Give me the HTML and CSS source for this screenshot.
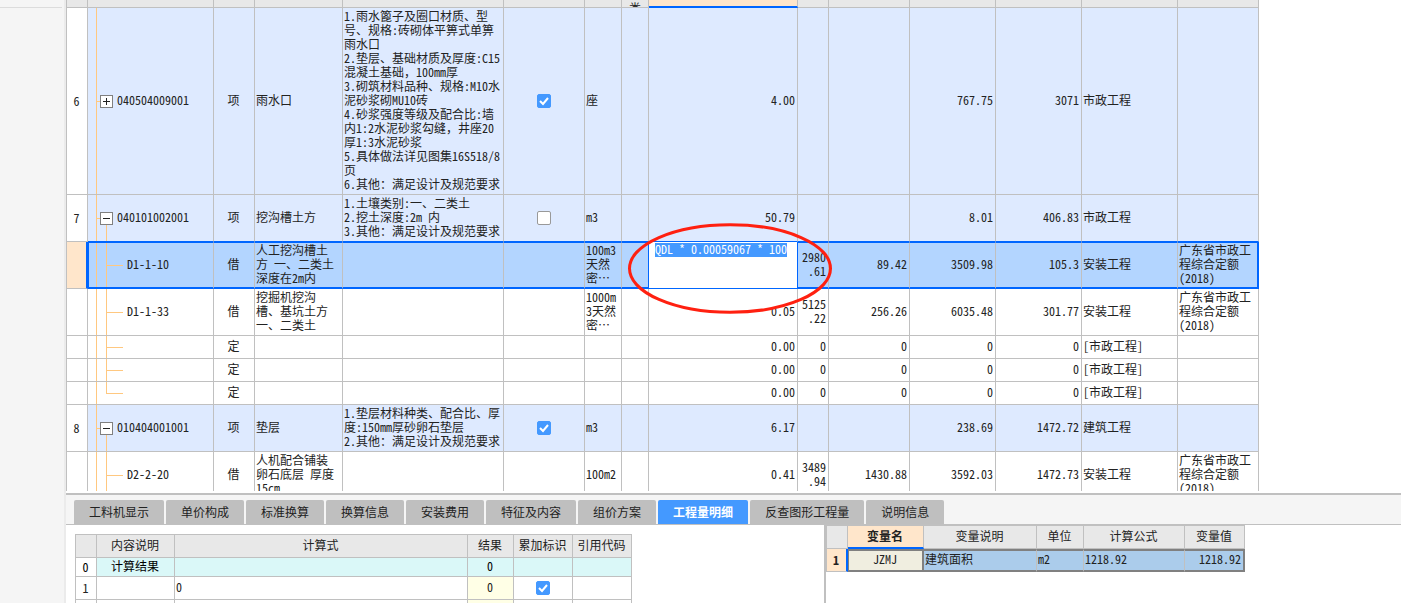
FILE: index.html
```html
<!DOCTYPE html>
<html lang="zh-CN">
<head>
<meta charset="utf-8">
<title>工程量明细</title>
<link rel="stylesheet" href="styles.css">
</head>
<body>
<div class="app">
<aside class="rail"><div class="rail-head"></div></aside>
<main class="main">
<section class="sheet">
<table class="grid bills">
<colgroup><col class="w-no"><col class="w-code"><col class="w-kind"><col class="w-name"><col class="w-desc"><col class="w-check"><col class="w-unit"><col class="w-class"><col class="w-qty"><col class="w-rate"><col class="w-price"><col class="w-cost"><col class="w-cost"><col class="w-major"><col class="w-book"></colgroup>
<thead>
<tr><th></th><th></th><th></th><th></th><th></th><th></th><th></th><th><div class="clip">类</div></th><th class="current"></th><th></th><th></th><th></th><th></th><th></th><th></th></tr>
</thead>
<tbody>
<tr class="item tall"><td class="no">6</td><td class="tree parent"><div class="node"><button class="toggle plus" aria-label="展开"></button><span class="code">040504009001</span></div></td><td class="mid">项</td><td>雨水口</td><td>1.雨水篦子及圈口材质、型<br>号、规格:砖砌体平箅式单箅<br>雨水口<br>2.垫层、基础材质及厚度:C15<br>混凝土基础，100mm厚<br>3.砌筑材料品种、规格:M10水<br>泥砂浆砌MU10砖<br>4.砂浆强度等级及配合比:墙<br>内1:2水泥砂浆勾缝，井座20<br>厚1:3水泥砂浆<br>5.具体做法详见图集16S518/8<br>页<br>6.其他：满足设计及规范要求</td><td class="pick"><input type="checkbox" aria-label="雨水口" checked></td><td>座</td><td></td><td class="num">4.00</td><td></td><td></td><td class="num">767.75</td><td class="num">3071</td><td>市政工程</td><td></td></tr>
<tr class="item lines above"><td class="no">7</td><td class="tree parent open"><div class="node"><button class="toggle" aria-label="收起"></button><span class="code">040101002001</span></div></td><td class="mid">项</td><td>挖沟槽土方</td><td>1.土壤类别:一、二类土<br>2.挖土深度:2m 内<br>3.其他：满足设计及规范要求</td><td class="pick"><input type="checkbox" aria-label="挖沟槽土方"></td><td>m3</td><td></td><td class="num">50.79</td><td></td><td></td><td class="num">8.01</td><td class="num">406.83</td><td>市政工程</td><td></td></tr>
<tr class="active lines"><td class="no"></td><td class="tree child"><div class="node"><span class="code">D1-1-10</span></div></td><td class="mid">借</td><td>人工挖沟槽土<br>方 一、二类土<br>深度在2m内</td><td></td><td></td><td>100m3<br>天然<br>密…</td><td></td><td class="edit"><textarea class="editor" aria-label="工程量表达式" spellcheck="false">QDL * 0.00059067 * 100</textarea></td><td class="num">2980<br>.61</td><td class="num">89.42</td><td class="num">3509.98</td><td class="num">105.3</td><td>安装工程</td><td>广东省市政工<br>程综合定额<br>(2018)</td></tr>
<tr class="lines"><td class="no"></td><td class="tree child"><div class="node"><span class="code">D1-1-33</span></div></td><td class="mid">借</td><td>挖掘机挖沟<br>槽、基坑土方<br>一、二类土</td><td></td><td></td><td>1000m<br>3天然<br>密…</td><td></td><td class="num">0.05</td><td class="num">5125<br>.22</td><td class="num">256.26</td><td class="num">6035.48</td><td class="num">301.77</td><td>安装工程</td><td>广东省市政工<br>程综合定额<br>(2018)</td></tr>
<tr><td class="no"></td><td class="tree child"></td><td class="mid">定</td><td></td><td></td><td></td><td></td><td></td><td class="num">0.00</td><td class="num">0</td><td class="num">0</td><td class="num">0</td><td class="num">0</td><td>[市政工程]</td><td></td></tr>
<tr><td class="no"></td><td class="tree child"></td><td class="mid">定</td><td></td><td></td><td></td><td></td><td></td><td class="num">0.00</td><td class="num">0</td><td class="num">0</td><td class="num">0</td><td class="num">0</td><td>[市政工程]</td><td></td></tr>
<tr><td class="no"></td><td class="tree child last"></td><td class="mid">定</td><td></td><td></td><td></td><td></td><td></td><td class="num">0.00</td><td class="num">0</td><td class="num">0</td><td class="num">0</td><td class="num">0</td><td>[市政工程]</td><td></td></tr>
<tr class="item lines"><td class="no">8</td><td class="tree parent open"><div class="node"><button class="toggle" aria-label="收起"></button><span class="code">010404001001</span></div></td><td class="mid">项</td><td>垫层</td><td>1.垫层材料种类、配合比、厚<br>度:150mm厚砂卵石垫层<br>2.其他：满足设计及规范要求</td><td class="pick"><input type="checkbox" aria-label="垫层" checked></td><td>m3</td><td></td><td class="num">6.17</td><td></td><td></td><td class="num">238.69</td><td class="num">1472.72</td><td>建筑工程</td><td></td></tr>
<tr class="lines"><td class="no"></td><td class="tree child"><div class="node"><span class="code">D2-2-20</span></div></td><td class="mid">借</td><td>人机配合铺装<br>卵石底层 厚度<br>15cm</td><td></td><td></td><td>100m2</td><td></td><td class="num">0.41</td><td class="num">3489<br>.94</td><td class="num">1430.88</td><td class="num">3592.03</td><td class="num">1472.73</td><td>安装工程</td><td>广东省市政工<br>程综合定额<br>(2018)</td></tr>
</tbody>
</table>
<svg class="ring" width="206" height="92" viewBox="0 0 206 92" fill="none" stroke="#ff2010" stroke-width="3" aria-hidden="true"><ellipse cx="103" cy="45.5" rx="100.5" ry="43.8"/></svg>
</section>
<section class="detail">
<nav class="tabs">
<button>工料机显示</button><button>单价构成</button><button>标准换算</button><button>换算信息</button><button>安装费用</button><button>特征及内容</button><button>组价方案</button><button class="on">工程量明细</button><button>反查图形工程量</button><button>说明信息</button>
</nav>
<div class="panes">
<div class="pane formulas">
<table class="grid calc">
<colgroup><col class="w-no"><col class="w-text"><col class="w-formula"><col class="w-result"><col class="w-flag"><col class="w-flag"></colgroup>
<thead><tr><th></th><th>内容说明</th><th>计算式</th><th>结果</th><th>累加标识</th><th>引用代码</th></tr></thead>
<tbody>
<tr class="total"><td class="no">0</td><td class="mid">计算结果</td><td></td><td class="mid">0</td><td></td><td></td></tr>
<tr><td class="no">1</td><td></td><td>0</td><td class="mid result">0</td><td class="pick"><input type="checkbox" aria-label="累加标识" checked></td><td></td></tr>
<tr><td class="no"></td><td></td><td></td><td class="result"></td><td></td><td></td></tr>
</tbody>
</table>
</div>
<div class="pane variables">
<table class="grid vars">
<colgroup><col class="w-no"><col class="w-var"><col class="w-vtext"><col class="w-vunit"><col class="w-vexpr"><col class="w-value"></colgroup>
<thead><tr><th></th><th class="current">变量名</th><th>变量说明</th><th>单位</th><th>计算公式</th><th>变量值</th></tr></thead>
<tbody><tr><td class="no">1</td><td class="mid name">JZMJ</td><td>建筑面积</td><td>m2</td><td>1218.92</td><td class="num">1218.92</td></tr></tbody>
</table>
</div>
</div>
</section>
</main>
</div>
</body>
</html>
```
FILE: styles.css
```css
:root {
  --line: #c0c0c0;
  --blue: #0066ff;
  --accent: #4499ff;
  --branch: #ffc880;
  --peach: #ffe6cb;
}

* { box-sizing: border-box; }

body {
  margin: 0;
  background: #fff;
  color: #222;
  font: 12px/14px "Noto Sans Mono CJK SC", "Noto Sans CJK SC", monospace;
}

button, textarea { font: inherit; }

.app {
  display: flex;
  height: 100vh;
  overflow: hidden;
}

.rail {
  flex: none;
  width: 66px;
  background: #f5f5f5;
  border-right: 2px solid #ebebeb;
}

.rail-head {
  height: 8px;
  margin-right: 2px;
  border-bottom: 1px solid #dcdcdc;
}

.main {
  flex: 1;
  min-width: 0;
  display: flex;
  flex-direction: column;
}

.sheet {
  position: relative;
  flex: 1;
  min-height: 0;
  margin-bottom: 2px;
  overflow: hidden;
}

.detail {
  flex: none;
  height: 110px;
  display: flex;
  flex-direction: column;
  border-top: 2px solid var(--line);
}

.grid {
  table-layout: fixed;
  width: 0;
  border-collapse: separate;
  border-spacing: 0;
  border-left: 1px solid var(--line);
}

.grid th,
.grid td {
  padding: 0 2px 2px 1px;
  border-right: 1px solid var(--line);
  border-bottom: 1px solid var(--line);
  white-space: nowrap;
  overflow: hidden;
  text-align: left;
  vertical-align: middle;
}

.grid th {
  background: #e8e8e8;
  font-weight: normal;
  text-align: center;
}

.grid td.mid { text-align: center; }
.grid td.num { text-align: right; }
.grid td.no { padding: 0 1px 0 0; background: #fff; text-align: center; }
.grid td.pick { padding: 0; }

.w-no { width: 21px; }
.w-code { width: 126px; }
.w-kind { width: 41px; }
.w-name { width: 88px; }
.w-desc { width: 161px; }
.w-check { width: 81px; }
.w-unit { width: 37px; }
.w-class { width: 27px; }
.w-qty { width: 149px; }
.w-rate { width: 31px; }
.w-price { width: 81px; }
.w-cost { width: 86px; }
.w-major { width: 96px; }
.w-book { width: 81px; }

.bills th { height: 8px; padding: 0; }
.bills td { height: 23px; }
.bills .lines td { height: 47px; }
.bills .tall td { height: 187px; }
.bills .item td { background-color: #deeaff; }
.bills .item td.no { background-color: #fff; }

.clip { height: 6px; overflow: hidden; }

.bills th.current {
  background: var(--peach);
  border-bottom: 2px solid var(--blue);
}

.bills .above td:not(.no) { border-bottom-color: var(--blue); }

.bills .active td {
  background-color: #b3d5ff;
  border-top: 1px solid var(--blue);
  border-bottom: 2px solid var(--blue);
}

.bills .active td.no {
  background: var(--peach);
  border-top: 0;
  border-right: 2px solid var(--blue);
  border-bottom: 1px solid var(--line);
}

.bills .active td:nth-child(8),
.bills .active td.edit { border-right-color: var(--blue); }
.bills .active td:last-child { border-right: 2px solid var(--blue); }
.bills .active td.edit {
  padding: 0;
  border-top: 0;
  border-bottom-width: 1px;
}

.editor {
  display: block;
  width: 100%;
  height: 46px;
  margin: 0;
  padding: 0 6px;
  border: 0;
  outline: 0;
  resize: none;
  overflow: hidden;
  white-space: nowrap;
  color: #fff;
  background: linear-gradient(var(--accent), var(--accent)) 6px 1px / 132px 14px no-repeat #fff;
}

.grid td.tree {
  padding: 0;
  background-origin: border-box;
  background-repeat: no-repeat;
}

.parent {
  background-image: linear-gradient(var(--branch), var(--branch)), linear-gradient(var(--branch), var(--branch));
  background-position: 8px 0, 8px 50%;
  background-size: 1px 100%, 4px 1px;
}

.parent.open {
  background-image: linear-gradient(var(--branch), var(--branch)), linear-gradient(var(--branch), var(--branch)), linear-gradient(var(--branch), var(--branch));
  background-position: 8px 0, 8px 50%, 18px 100%;
  background-size: 1px 100%, 4px 1px, 1px 50%;
}

.child {
  background-image: linear-gradient(var(--branch), var(--branch)), linear-gradient(var(--branch), var(--branch)), linear-gradient(var(--branch), var(--branch));
  background-position: 8px 0, 18px 0, 18px 50%;
  background-size: 1px 100%, 1px 100%, 17px 1px;
}

.child.last { background-size: 1px 100%, 1px 50%, 17px 1px; }

.bills .active td.tree { border-left: 1px solid var(--blue); }

.node {
  display: flex;
  align-items: center;
  gap: 4px;
  padding-left: 12px;
}

.child .node { padding-left: 39px; }
.active .child .node { padding-left: 38px; }
.code { padding-bottom: 2px; }

.toggle {
  flex: none;
  width: 13px;
  height: 13px;
  padding: 0;
  border: 1px solid #808080;
  background: linear-gradient(#222, #222) center / 7px 1px no-repeat #fff;
}

.toggle.plus {
  background: linear-gradient(#222, #222) center / 7px 1px no-repeat, linear-gradient(#222, #222) center / 1px 7px no-repeat #fff;
}

input[type="checkbox"] {
  appearance: none;
  display: block;
  width: 14px;
  height: 14px;
  margin: 0 auto;
  border: 1px solid #999;
  border-radius: 2px;
  background: #fff;
}

input[type="checkbox"]:checked {
  border-color: var(--accent);
  background: var(--accent) url("data:image/svg+xml,%3Csvg xmlns='http://www.w3.org/2000/svg' viewBox='0 0 12 12'%3E%3Cpath d='M2 6l3 3 5-6' fill='none' stroke='white' stroke-width='2'/%3E%3C/svg%3E") center / 12px 12px no-repeat;
}

.ring {
  position: absolute;
  left: 561px;
  top: 223px;
  pointer-events: none;
}

.tabs {
  flex: none;
  display: flex;
  gap: 2px;
  padding: 5px 8px 0;
  background: #f5f5f5;
  border-bottom: 1px solid var(--line);
}

.tabs button {
  height: 24px;
  padding: 0 15px;
  border: 0;
  border-radius: 2px 2px 0 0;
  background: #bfbfbf;
  color: #222;
  white-space: nowrap;
}

.tabs .on {
  background: var(--accent);
  color: #fff;
  font-weight: bold;
}

.panes {
  flex: 1;
  min-height: 0;
  display: flex;
}

.pane { overflow: hidden; }

.formulas {
  flex: 0 0 760px;
  padding: 9px 9px 0;
  border-right: 2px solid var(--line);
}

.variables { flex: 1; }

.w-text { width: 78px; }
.w-formula { width: 293px; }
.w-result { width: 46px; }
.w-flag { width: 59px; }

.calc { border-top: 1px solid var(--line); }
.calc th, .calc td { height: 23px; }
.calc .total td { height: 19px; background: #daf8f8; color: #000; }
.calc .total td.no { background: #fff; }
.calc td.result { background: #ffffe6; }

.w-var { width: 76px; }
.w-vtext { width: 113px; }
.w-vunit { width: 47px; }
.w-vexpr { width: 101px; }
.w-value { width: 60px; }

.vars { border-top: 1px solid var(--line); }
.vars th { height: 23px; }
.vars th.current {
  background: var(--peach);
  border-bottom: 2px solid var(--blue);
  font-weight: bold;
}

.grid.vars td {
  height: 23px;
  padding-bottom: 4px;
  background: #abcceb;
  border-top: 2px solid #808080;
  border-bottom: 2px solid #808080;
}

.grid.vars td.no {
  padding-bottom: 0;
  background: var(--peach);
  border-top: 0;
  border-right: 2px solid var(--blue);
  border-bottom: 1px solid var(--line);
  font-weight: bold;
}

.grid.vars td.name {
  background: #f0eee0;
  border-left: 1px solid #808080;
  border-right: 2px solid #808080;
}

.grid.vars td:last-child { border-right: 2px solid #808080; }
```
